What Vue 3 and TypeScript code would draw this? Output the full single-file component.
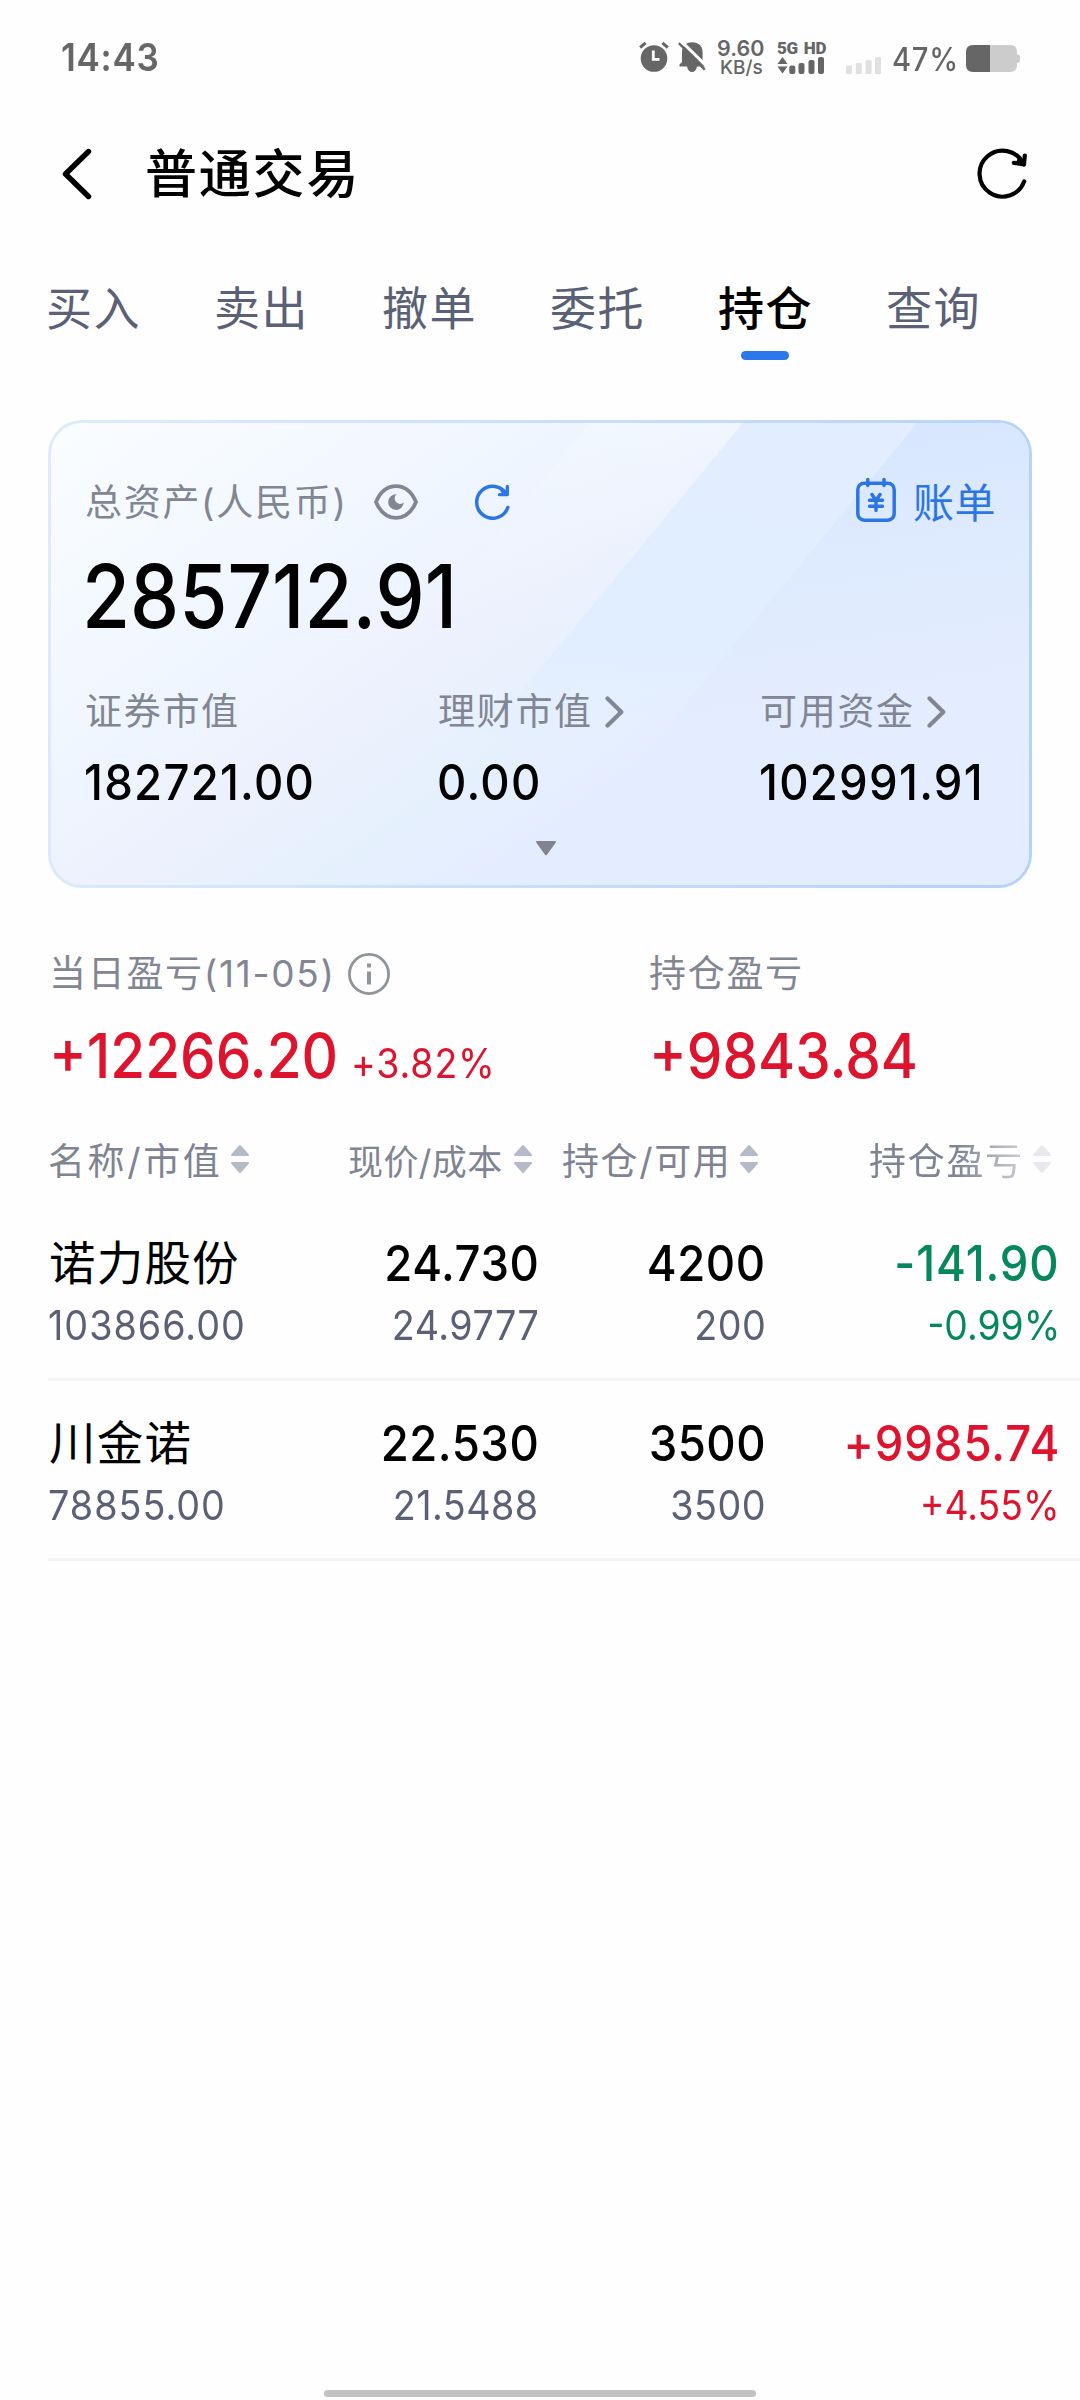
<script setup lang="ts">
interface Holding {
  name: string
  marketValue: string
  price: string
  cost: string
  position: string
  available: string
  profit: string
  ratio: string
  trend: 'up' | 'down'
}

const tabs: string[] = ['买入', '卖出', '撤单', '委托', '持仓', '查询']
const activeTab = '持仓'

const columns: { label: string; cls: string }[] = [
  { label: '名称/市值', cls: 'h1' },
  { label: '现价/成本', cls: 'h2' },
  { label: '持仓/可用', cls: 'h3' },
  { label: '持仓盈亏', cls: 'h4' },
]

const holdings: Holding[] = [
  { name: '诺力股份', marketValue: '103866.00', price: '24.730', cost: '24.9777', position: '4200', available: '200', profit: '-141.90', ratio: '-0.99%', trend: 'down' },
  { name: '川金诺', marketValue: '78855.00', price: '22.530', cost: '21.5488', position: '3500', available: '3500', profit: '+9985.74', ratio: '+4.55%', trend: 'up' },
]
</script>

<template>
  <div class="screen">
    <div class="status">
      <span class="time"><span class="num">14:43</span></span>
      <svg class="alarm" width="30" height="30" viewBox="0 0 30 30">
        <circle cx="15" cy="16.500" r="13.300" fill="#666" />
        <path d="M1.200 5.800L6.800 1.200M28.800 5.800L23.200 1.200" stroke="#fefefe" stroke-width="6" />
        <path d="M1.200 5.500L6.600 .9M28.800 5.500L23.400 .9" stroke="#666" stroke-width="3" />
        <path d="M14.300 8.500V17.300H20.500" fill="none" stroke="#fff" stroke-width="2.800" />
      </svg>
      <svg class="bell" width="28" height="30" viewBox="0 0 28 30">
        <path d="M14 .3C21 .3 24.6 4.5 24.6 10.5V20.500L27 24.500H19C18.500 28 16.500 30 14 30S9.500 28 9 24.500H1.500V22.500L4 20V9C5 3 9 .3 14 .3Z" fill="#666" />
        <path d="M2.500-1.500L30 25.500" stroke="#fff" stroke-width="3" />
        <path d="M.8 1.200L26.800 27.600" stroke="#666" stroke-width="2.400" />
      </svg>
      <span class="speed"><b>9.60</b><b class="unit">KB/s</b></span>
      <span class="net">
        <span class="tech"><i>5G</i><i>HD</i></span>
        <svg width="48" height="17" viewBox="0 0 48 17" fill="#666">
          <path d="M5.500 0L10.500 7H.500ZM5.500 16.500L10.500 9.500H.500Z" />
          <rect x="12.300" y="8.500" width="6" height="8.500" rx="2" />
          <rect x="21.500" y="6" width="6" height="11" rx="2" />
          <rect x="31.500" y="3" width="6" height="14" rx="2" />
          <rect x="41" y="0" width="6" height="17" rx="2" />
        </svg>
      </span>
      <svg class="sim2" width="36" height="17" viewBox="0 0 36 17" fill="#e0e0e0">
        <rect x="0" y="8.500" width="6" height="8.500" rx="1.500" />
        <rect x="9.800" y="6" width="6" height="11" rx="1.500" />
        <rect x="19.600" y="3" width="6" height="14" rx="1.500" />
        <rect x="29" y="0" width="6" height="17" rx="1.500" />
      </svg>
      <span class="pct"><span class="num">47%</span></span>
      <svg class="battery" width="54" height="27" viewBox="0 0 54 27">
        <path d="M7 0H44Q51 0 51 7V9.500Q54 9.500 54 12V15.500Q54 18 51 18V20Q51 27 44 27H7Z" fill="#ccc" />
        <path d="M24 0H7Q0 0 0 7V20Q0 27 7 27H24Z" fill="#666" />
      </svg>
    </div>

    <header class="header">
      <svg class="back" width="32" height="52" viewBox="0 0 32 52">
        <path d="M27.500 3.500L4.500 26L27.500 48.500" fill="none" stroke="#000" stroke-width="5.400" stroke-linecap="round" stroke-linejoin="round" />
      </svg>
      <h1>普通交易</h1>
      <svg class="reload" width="52" height="52" viewBox="0 0 52 52">
        <g fill="none" stroke="#000" stroke-width="4.200" stroke-linecap="round" stroke-linejoin="round">
          <path d="M47.200 33.400A23 23 0 1 1 46.200 15.500" />
          <path d="M47.800 7.500L47 16.300L36.800 14.800" />
          <path d="M47 16.300L42 12.500" />
        </g>
      </svg>
    </header>

    <nav class="tabs">
      <span v-for="t in tabs" :key="t" class="tab" :class="{ active: t === activeTab }">{{ t }}</span>
    </nav>

    <section class="card">
      <svg class="rays" width="978" height="462" viewBox="0 0 978 462">
        <defs>
          <linearGradient id="ray0" x1="0" y1="0" x2="0" y2="1"><stop offset="0" stop-color="#f3f9ff" stop-opacity=".6" /><stop offset=".45" stop-color="#eff5ff" stop-opacity="0" /></linearGradient>
          <linearGradient id="ray1" x1="0" y1="0" x2="0" y2="1"><stop offset="0" stop-color="#e2eeff" /><stop offset=".5" stop-color="#e1eeff" /><stop offset=".7" stop-color="#e4edff" stop-opacity="0" /></linearGradient>
          <linearGradient id="ray2" x1=".45" y1="0" x2=".6" y2="1"><stop offset="0" stop-color="#d6e6ff" /><stop offset=".3" stop-color="#deeafe" /><stop offset=".48" stop-color="#e0ebfd" /><stop offset=".62" stop-color="#e4edff" /></linearGradient>
        </defs>
        <path d="M539 0H692L311 462H158Z" fill="url(#ray0)" />
        <path d="M692 0H978V462H311Z" fill="url(#ray1)" />
        <path d="M866 0H978V462H485Z" fill="url(#ray2)" />
      </svg>
      <div class="card-body">
        <div class="asset-head">
          <span class="label">总资产(人民币)</span>
          <svg class="eye" width="44" height="36" viewBox="0 0 44 36">
            <path d="M2 18C6 8.500 13 2.200 22 2.200S38 8.500 42 18C38 27.500 31 33.800 22 33.800S6 27.500 2 18Z" fill="none" stroke="#828693" stroke-width="3.800" stroke-linejoin="round" />
            <path d="M22.500 10.300A7.800 7.800 0 1 0 29.800 18.500A5.300 5.300 0 0 1 22.500 10.300Z" fill="#828693" />
          </svg>
          <svg class="refresh" width="36" height="36" viewBox="0 0 36 36">
            <path d="M32.800 23.500A16 16 0 1 1 31.500 10.200" fill="none" stroke="#2b76e4" stroke-width="3.500" stroke-linecap="round" />
            <path d="M32.300 2.500V10.700H24.500M32 10.500L27 6.800" fill="none" stroke="#2b76e4" stroke-width="3.300" stroke-linecap="round" stroke-linejoin="round" />
          </svg>
          <span class="bill">
            <svg width="40" height="46" viewBox="0 0 40 46" fill="none" stroke="#2b76e4" stroke-width="3.500" stroke-linecap="round" stroke-linejoin="round">
              <rect x="1.800" y="6.200" width="36.400" height="37" rx="6.500" />
              <path d="M11.800 2.500V8.500M28 2.500V8.500M16 17.500L20 23.500L24 17.500M13.500 23.300H26.500M13.500 29.300H26.500M20 23.500V33.500" />
            </svg>
            <span>账单</span>
          </span>
        </div>
        <div class="total"><span class="num">285712.91</span></div>
        <div class="metrics">
          <div class="metric m1">
            <div class="label">证券市值</div>
            <div class="value"><span class="num">182721.00</span></div>
          </div>
          <div class="metric m2">
            <div class="label">理财市值<svg class="chev" width="19" height="32" viewBox="0 0 19 32"><path d="M2.500 2.500L16.300 16L2.500 29.500" /></svg></div>
            <div class="value"><span class="num">0.00</span></div>
          </div>
          <div class="metric m3">
            <div class="label">可用资金<svg class="chev" width="19" height="32" viewBox="0 0 19 32"><path d="M2.500 2.500L16.300 16L2.500 29.500" /></svg></div>
            <div class="value"><span class="num">102991.91</span></div>
          </div>
        </div>
        <svg class="expand" width="22" height="15" viewBox="0 0 22 15">
          <path d="M2 1H20L11 13.300Z" fill="#808491" stroke="#808491" stroke-width="2" stroke-linejoin="round" />
        </svg>
      </div>
    </section>

    <section class="profit">
      <div class="day">
        <div class="label">当日盈亏(11-05)
          <svg class="info" width="42" height="42" viewBox="0 0 42 42">
            <circle cx="21" cy="21" r="19.600" fill="none" stroke="#8f9598" stroke-width="2.800" />
            <path d="M21 10.500V14.500M21 18.500V31.500" stroke="#8f9598" stroke-width="4" />
          </svg>
        </div>
        <div class="amount up"><span class="num">+12266.20</span><small class="num">+3.82%</small></div>
      </div>
      <div>
        <div class="label">持仓盈亏</div>
        <div class="amount up"><span class="num">+9843.84</span></div>
      </div>
    </section>

    <div class="thead">
      <div v-for="c in columns" :key="c.label" class="th" :class="c.cls">
        <span>{{ c.label }}</span>
        <svg width="18" height="30" viewBox="0 0 18 30" fill="#b4bac7" stroke="#b4bac7" stroke-width="2" stroke-linejoin="round">
          <path d="M9 2L17 11H1ZM9 28L17 19H1Z" />
        </svg>
      </div>
    </div>

    <div v-for="h in holdings" :key="h.name" class="row">
      <div class="cell name"><div class="main cn">{{ h.name }}</div><div class="sub"><span class="num">{{ h.marketValue }}</span></div></div>
      <div class="cell"><div class="main"><span class="num">{{ h.price }}</span></div><div class="sub"><span class="num">{{ h.cost }}</span></div></div>
      <div class="cell"><div class="main"><span class="num">{{ h.position }}</span></div><div class="sub"><span class="num">{{ h.available }}</span></div></div>
      <div class="cell" :class="h.trend"><div class="main"><span class="num">{{ h.profit }}</span></div><div class="sub"><span class="num">{{ h.ratio }}</span></div></div>
    </div>

    <div class="home"></div>
  </div>
</template>

<style>
body { background: #fefefe; }
</style>

<style scoped>
.screen {
  box-sizing: border-box;
  display: flex;
  flex-direction: column;
  width: 1080px;
  height: 2400px;
  overflow: hidden;
  background: #fefefe;
  font-family: Inter, "Noto Sans CJK SC", sans-serif;
  color: #000;
  white-space: nowrap;
}
svg { display: block; flex: none; }
.num { display: inline-block; transform: scaleX(0.91); transform-origin: left center; }
.status { display: flex; align-items: center; height: 114px; padding-left: 61px; color: #666; }
.time { width: 578px; font-size: 38.500px; font-weight: 600; line-height: 40px; letter-spacing: 0.800px; }
.alarm { margin-right: 9px; }
.speed { display: flex; flex-direction: column; width: 60px; margin-left: 11px; margin-top: 1px; }
.speed b { font-size: 21.500px; line-height: 20px; font-weight: 600; }
.speed .unit { font-size: 19px; line-height: 19px; font-weight: 500; padding-left: 3px; }
.net { width: 69px; }
.tech { display: flex; gap: 6px; height: 17px; align-items: center; }
.tech i { font-family: Roboto, sans-serif; font-style: normal; font-size: 17px; line-height: 17px; font-weight: 900; letter-spacing: -0.300px; }
.sim2 { margin-top: 16px; }
.pct { width: 74px; margin-left: 10px; font-size: 32px; font-weight: 500; margin-top: 4px; letter-spacing: 0.800px; }
.battery { margin-top: 3px; }
.header { display: flex; align-items: center; height: 120px; padding-left: 61px; }
h1 { flex: 1; margin: 2px 0 0 52px; font-size: 52px; line-height: 60px; font-weight: 500; letter-spacing: 1.800px; }
.reload { margin-right: 51px; }
.tabs { display: flex; height: 186px; padding-left: 46px; }
.tab { position: relative; box-sizing: border-box; width: 168px; padding-top: 44px; font-size: 46px; line-height: 60px; letter-spacing: 1.500px; color: #5a6075; }
.tab.active { color: #000; font-weight: 500; }
.tab.active::after { content: ""; position: absolute; left: 23px; top: 117px; width: 48px; height: 9px; border-radius: 5px; background: #2a77ee; }
.card {
  position: relative;
  box-sizing: border-box;
  width: 984px;
  height: 468px;
  margin-left: 48px;
  border: 3px solid transparent;
  border-radius: 34px;
  background: linear-gradient(145deg, #fafdff 0%, #f0f6ff 30%, #ecf1fd 44%, #e6f1fd 54%, #e4edff 66%) padding-box, linear-gradient(100deg, #dfebfc, #b4d1f8) border-box;
}
.rays { position: absolute; left: 0; top: 0; border-radius: 31px; }
.card-body { position: relative; padding-left: 34px; }
.label { display: flex; align-items: center; font-size: 37px; line-height: 44px; letter-spacing: 1.700px; color: #828693; }
.asset-head { display: flex; align-items: center; padding-top: 55px; height: 50px; }
.asset-head .label { width: 289px; }
.eye { margin-top: -2px; }
.refresh { margin: -2px 0 0 57px; }
.bill { display: flex; align-items: center; margin-left: 345px; gap: 17px; font-size: 41px; line-height: 50px; letter-spacing: 0.500px; color: #2b76e4; }
.bill svg { margin-top: -7px; }
.total { margin-top: 23px; margin-left: -3px; height: 90px; line-height: 90px; font-size: 88px; font-weight: 500; }
.total .num { transform: scaleX(0.887); }
.metrics { display: flex; margin-top: 49px; }
.m1 { width: 353px; }
.m2 { width: 322px; }
.chev { margin-left: 12px; fill: none; stroke: #828693; stroke-width: 4.200; stroke-linecap: round; stroke-linejoin: round; }
.value { margin-top: 21px; margin-left: -1px; height: 54px; line-height: 54px; font-size: 50px; font-weight: 500; letter-spacing: 1.400px; }
.expand { margin: 32px 0 0 450px; }
.profit { display: flex; margin: 64px 0 0 49px; }
.day { width: 600px; }
.info { margin-left: 12px; }
.amount { display: flex; align-items: baseline; margin-top: 23px; height: 74px; line-height: 74px; font-size: 62px; font-weight: 500; }
.amount .num { transform: scaleX(0.913); }
.amount small { font-size: 41px; font-weight: 400; margin-left: -15px; letter-spacing: 1px; }
.up { color: #de132e; }
.down { color: #06885a; }
.thead { display: flex; align-items: center; margin-top: 41px; height: 50px; padding-left: 48px; font-size: 37px; letter-spacing: 1.700px; color: #7f8492; }
.th { display: flex; align-items: center; gap: 9px; }
.h1 { width: 300px; letter-spacing: 2.600px; }
.h2 { width: 214px; font-size: 35px; letter-spacing: 0.400px; gap: 11px; }
.h3 { width: 307px; letter-spacing: 1.600px; }
.h4 { -webkit-mask-image: linear-gradient(90deg, #000 48%, rgba(0, 0, 0, 0.300) 90%); mask-image: linear-gradient(90deg, #000 48%, rgba(0, 0, 0, 0.300) 90%); }
.row { box-sizing: border-box; display: flex; height: 180px; margin-left: 48px; padding-top: 32px; border-bottom: 3px solid #f3f4f8; }
.thead + .row { margin-top: 17px; }
.cell { width: 227px; text-align: right; }
.cell.name { width: 264px; text-align: left; }
.cell .num { transform-origin: right center; }
.cell.name .num { transform-origin: left center; }
.cell:last-child { width: 294px; }
.main { height: 60px; line-height: 60px; font-size: 50px; font-weight: 500; letter-spacing: 0.600px; }
.cell:last-child .main { letter-spacing: 1px; }
.main.cn { font-size: 46.500px; font-weight: 400; letter-spacing: 1.200px; padding-left: 1px; }
.sub { height: 66px; line-height: 64px; font-size: 41px; letter-spacing: 0.500px; color: #5b6074; }
.name .sub { letter-spacing: 1.100px; }
.sub .num { transform: scaleX(0.92); }
.cell:last-child .sub { letter-spacing: 0; }
.cell:last-child .sub .num { transform: scaleX(0.91); }
.up .sub, .down .sub { color: inherit; }
.home { width: 432px; height: 7px; margin: auto auto 3px; border-radius: 4px; background: #c2c2c2; }
</style>
